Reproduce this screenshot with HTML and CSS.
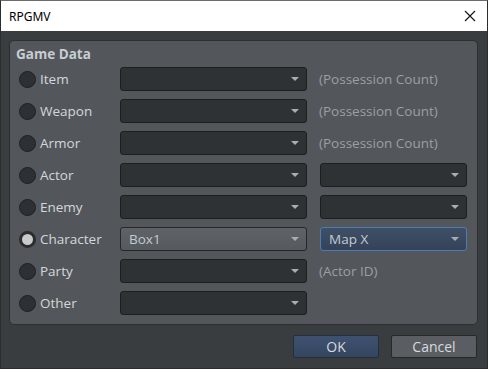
FILE: index.html
```html
<!DOCTYPE html>
<html lang="en">
<head>
  <meta charset="UTF-8">
  <title>RPGMV</title>
  <link rel="stylesheet" href="styles.css">
</head>
<body>
  <div class="window">
    <div class="titlebar">
      <span class="title">RPGMV</span>
      <svg class="close" viewBox="0 0 12 12" width="12" height="12">
        <path d="M1 1L11 11M11 1L1 11" stroke="#111" stroke-width="1.1" fill="none"/>
      </svg>
    </div>
    <div class="body">
      <div class="group">
        <div class="group-title">Game Data</div>
        <div class="rows">
          <label class="opt"><span class="radio"></span>Item</label>
          <div class="combo"><span></span><i class="arrow"></i></div>
          <span class="note">(Possession Count)</span>

          <label class="opt"><span class="radio"></span>Weapon</label>
          <div class="combo"><span></span><i class="arrow"></i></div>
          <span class="note">(Possession Count)</span>

          <label class="opt"><span class="radio"></span>Armor</label>
          <div class="combo"><span></span><i class="arrow"></i></div>
          <span class="note">(Possession Count)</span>

          <label class="opt"><span class="radio"></span>Actor</label>
          <div class="combo"><span></span><i class="arrow"></i></div>
          <div class="combo"><span></span><i class="arrow"></i></div>

          <label class="opt"><span class="radio"></span>Enemy</label>
          <div class="combo"><span></span><i class="arrow"></i></div>
          <div class="combo"><span></span><i class="arrow"></i></div>

          <label class="opt"><span class="radio checked"></span>Character</label>
          <div class="combo active"><span>Box1</span><i class="arrow"></i></div>
          <div class="combo focus"><span>Map X</span><i class="arrow"></i></div>

          <label class="opt"><span class="radio"></span>Party</label>
          <div class="combo"><span></span><i class="arrow"></i></div>
          <span class="note">(Actor ID)</span>

          <label class="opt"><span class="radio"></span>Other</label>
          <div class="combo"><span></span><i class="arrow"></i></div>
          <span></span>
        </div>
      </div>
      <div class="buttons">
        <button class="btn ok">OK</button>
        <button class="btn">Cancel</button>
      </div>
    </div>
  </div>
</body>
</html>
```

FILE: styles.css
```css
* {
  margin: 0;
  padding: 0;
  box-sizing: border-box;
}

html, body {
  width: 488px;
  height: 369px;
  overflow: hidden;
  font-family: 'Open Sans', 'Noto Sans', sans-serif;
}

.window {
  width: 488px;
  height: 369px;
  display: flex;
  flex-direction: column;
  background: #3a3d40;
  border: 1px solid #2a2c2e;
  border-top-color: #6a6d70;
}

.titlebar {
  height: 30px;
  background: #fff;
  display: flex;
  align-items: center;
  justify-content: space-between;
  padding: 0 11px 0 8px;
}

.title {
  font-family: 'Noto Sans', sans-serif;
  font-size: 12px;
  color: #000;
}

.body {
  flex: 1;
  padding: 9px 9px 0 8px;
  display: flex;
  flex-direction: column;
}

.group {
  height: 285px;
  background: #53575b;
  border: 1px solid #2c2f31;
  border-radius: 5px;
  padding: 3px 11px 0 9px;
}

.group-title {
  font-size: 13.5px;
  font-weight: 700;
  color: #c9cdd1;
  height: 20px;
  line-height: 20px;
  margin-left: -3px;
}

.rows {
  margin-top: 3px;
  display: grid;
  grid-template-columns: 88px 187px 147px;
  grid-auto-rows: 24px;
  column-gap: 13px;
  row-gap: 8px;
  align-items: center;
}

.opt {
  display: flex;
  align-items: center;
  gap: 4px;
  font-size: 13.5px;
  color: #d3d7db;
  white-space: nowrap;
}

.radio {
  flex: none;
  width: 17px;
  height: 17px;
  border-radius: 50%;
  background: #2e3134;
  border: 1px solid #1e2022;
}

.radio.checked {
  background: #c9cacb;
  border: 3px solid #2a2c2e;
}

.combo {
  height: 24px;
  display: flex;
  align-items: center;
  justify-content: space-between;
  padding: 0 7px 0 8px;
  background: #2f3235;
  border: 1px solid #1c1e20;
  border-radius: 3px;
  font-size: 13.5px;
  color: #c3cad2;
}

.combo.active {
  background: linear-gradient(#5f6367, #555a5e);
  border-color: #25282a;
}

.combo.focus {
  background: linear-gradient(#3f4f66, #34435a);
  border-color: #4d7cb4;
}

.arrow {
  width: 0;
  height: 0;
  border-left: 4px solid transparent;
  border-right: 4px solid transparent;
  border-top: 4px solid #a9adb1;
}

.note {
  font-size: 13.5px;
  color: #9a9fa4;
  margin-left: -1px;
  white-space: nowrap;
}

.buttons {
  display: flex;
  justify-content: flex-end;
  gap: 12px;
  margin-top: 10px;
  padding-right: 1px;
}

.btn {
  width: 86px;
  height: 23px;
  font-family: 'Open Sans', 'Noto Sans', sans-serif;
  font-size: 14px;
  color: #d5dade;
  background: #5a5e62;
  border: 1px solid #262829;
  border-radius: 2px;
}

.btn.ok {
  background: linear-gradient(#3e5170, #34465f);
  border-color: #24303e;
}
```
